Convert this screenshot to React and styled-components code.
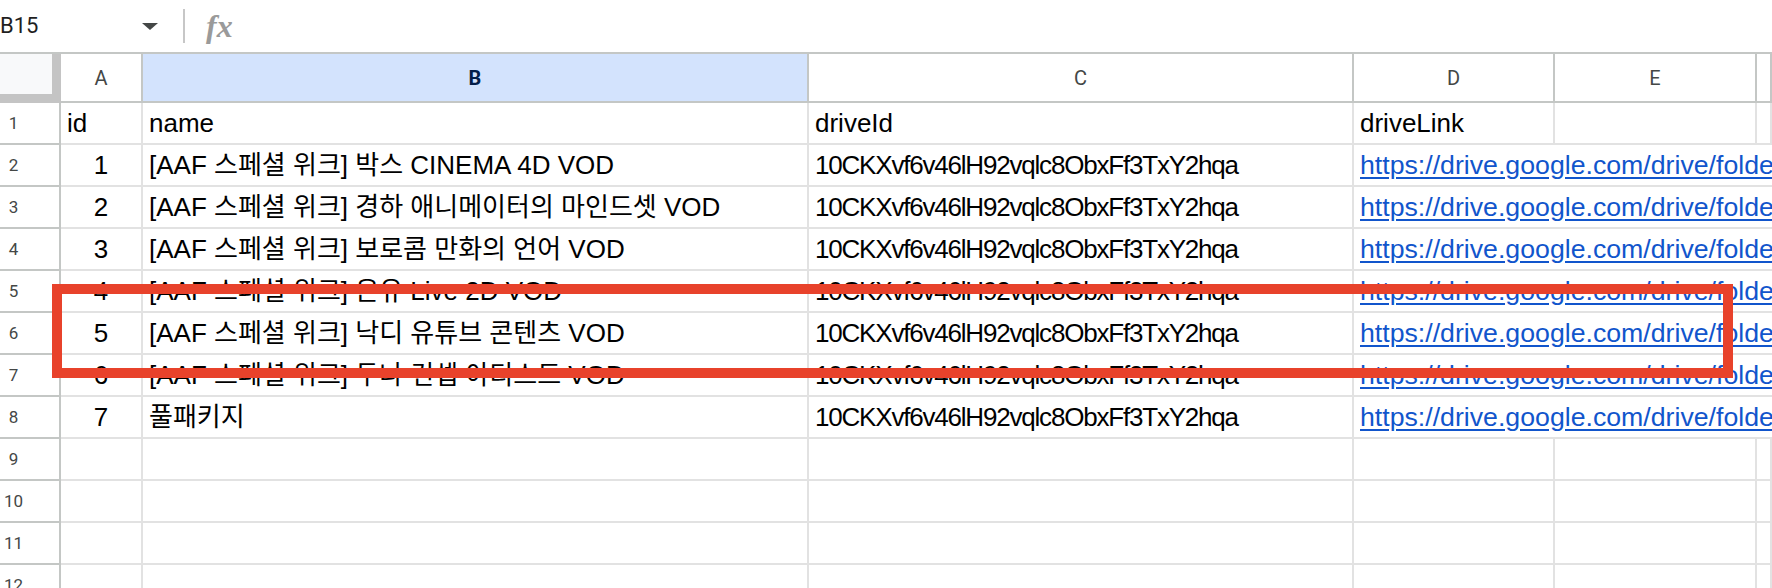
import React from "react";
import styled, { createGlobalStyle } from "styled-components";

const GlobalStyle = createGlobalStyle`
  body {
    margin: 0;
    background: #ffffff;
    overflow: hidden;
    font-family: "Liberation Sans", Arial, "Noto Sans CJK KR", sans-serif;
  }
`;

const COLUMNS = "61px 82px 666px 545px 201px 202px 1fr";

const Sheet = styled.div`
  position: relative;
  width: 1772px;
  height: 588px;
  overflow: hidden;
  background: #ffffff;
`;

const FormulaBar = styled.div`
  display: flex;
  align-items: center;
  height: 52px;
`;

const NameBox = styled.div`
  width: 142px;
  font-family: Roboto, "Liberation Sans", sans-serif;
  font-size: 22px;
  color: #1f1f1f;
  line-height: 1;
`;

const Caret = styled.div`
  width: 0;
  height: 0;
  border-left: 8px solid transparent;
  border-right: 8px solid transparent;
  border-top: 7px solid #444746;
`;

const Divider = styled.div`
  width: 2px;
  height: 34px;
  margin-left: 25px;
  background: #c7c7c7;
`;

const FxLabel = styled.div`
  margin-left: 21px;
  font-family: "Liberation Serif", serif;
  font-style: italic;
  font-weight: 700;
  font-size: 32px;
  color: #9a9a9a;
  line-height: 1;
`;

const Row = styled.div`
  display: grid;
  grid-template-columns: ${COLUMNS};
  height: ${(p) => p.$height}px;
  ${(p) => p.$top && "border-top: 2px solid #c4c7c5;"}
`;

const Corner = styled.div`
  background: #f8f9fa;
  border-right: 9px solid #c4c4c4;
  border-bottom: 9px solid #c4c4c4;
`;

const ColHead = styled.div`
  display: flex;
  align-items: center;
  justify-content: center;
  border-right: 2px solid #c4c7c5;
  border-bottom: 2px solid #c4c7c5;
  background: ${(p) => (p.$selected ? "#d3e3fd" : "#ffffff")};
  font-family: Roboto, "Liberation Sans", sans-serif;
  font-size: 20px;
  font-weight: ${(p) => (p.$selected ? 700 : 400)};
  color: ${(p) => (p.$selected ? "#041e49" : "#444746")};
`;

const RowHead = styled.div`
  display: flex;
  align-items: center;
  justify-content: center;
  padding-right: 32px;
  border-right: 2px solid #c4c7c5;
  border-bottom: 2px solid #c4c7c5;
  font-family: Roboto, "Liberation Sans", sans-serif;
  font-size: 17px;
  color: #444746;
`;

const Cell = styled.div`
  display: flex;
  align-items: center;
  justify-content: ${(p) => (p.$center ? "center" : "flex-start")};
  padding: 0 6px;
  border-right: 2px solid #e2e2e2;
  border-bottom: 2px solid #e2e2e2;
  font-size: 26px;
  line-height: 1;
  color: #000000;
  white-space: nowrap;
  overflow: hidden;
  letter-spacing: ${(p) => (p.$tight ? "-1.2px" : "normal")};
`;

const LinkCell = styled(Cell)`
  grid-column: span 3;
  border-right: none;
  font-size: 26.7px;
  color: #1155cc;
  text-decoration: underline;
  text-underline-offset: 3px;
`;

const Highlight = styled.div`
  position: absolute;
  left: 52px;
  top: 284px;
  width: 1681px;
  height: 94px;
  box-sizing: border-box;
  border: 10px solid #e8422b;
  pointer-events: none;
`;

const DRIVE_ID = "10CKXvf6v46lH92vqlc8ObxFf3TxY2hqa";
const LINK = "https://drive.google.com/drive/folders/" + DRIVE_ID;

const ROWS = [
  { id: "id", name: "name", driveId: "driveId", link: "driveLink" },
  { id: "1", name: "[AAF 스페셜 위크] 박스 CINEMA 4D VOD" },
  { id: "2", name: "[AAF 스페셜 위크] 경하 애니메이터의 마인드셋 VOD" },
  { id: "3", name: "[AAF 스페셜 위크] 보로콤 만화의 언어 VOD" },
  { id: "4", name: "[AAF 스페셜 위크] 온유 Live 2D VOD" },
  { id: "5", name: "[AAF 스페셜 위크] 낙디 유튜브 콘텐츠 VOD" },
  { id: "6", name: "[AAF 스페셜 위크] 두나 컨셉 아티스트 VOD" },
  { id: "7", name: "풀패키지" },
];

const COL_LETTERS = ["A", "B", "C", "D", "E", ""];

function App() {
  return (
    <Sheet>
      <GlobalStyle />
      <FormulaBar>
        <NameBox>B15</NameBox>
        <Caret />
        <Divider />
        <FxLabel>fx</FxLabel>
      </FormulaBar>

      <Row $height={49} $top>
        <Corner />
        {COL_LETTERS.map((letter, i) => (
          <ColHead key={i} $selected={letter === "B"}>
            {letter}
          </ColHead>
        ))}
      </Row>

      {ROWS.map((row, i) => {
        const isHeader = i === 0;
        return (
          <Row key={i} $height={42}>
            <RowHead>{i + 1}</RowHead>
            <Cell $center={!isHeader}>{row.id}</Cell>
            <Cell>{row.name}</Cell>
            <Cell $tight={!isHeader}>{isHeader ? row.driveId : DRIVE_ID}</Cell>
            {isHeader ? (
              <>
                <Cell>{row.link}</Cell>
                <Cell />
                <Cell />
              </>
            ) : (
              <LinkCell>{LINK}</LinkCell>
            )}
          </Row>
        );
      })}

      {[9, 10, 11, 12].map((n) => (
        <Row key={n} $height={42}>
          <RowHead>{n}</RowHead>
          <Cell />
          <Cell />
          <Cell />
          <Cell />
          <Cell />
          <Cell />
        </Row>
      ))}

      <Highlight />
    </Sheet>
  );
}

export default App;
